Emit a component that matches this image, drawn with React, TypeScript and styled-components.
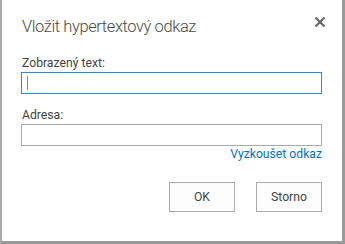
import React from 'react';
import styled, { createGlobalStyle } from 'styled-components';

const GlobalStyle = createGlobalStyle`
  html, body {
    margin: 0;
    padding: 0;
    background: #ffffff;
  }
  body {
    font-family: Roboto, 'Open Sans', sans-serif;
  }
`

const Dialog = styled.div`
  width: 345px;
  height: 244px;
  box-sizing: border-box;
  background: #ffffff;
  border-left: 2px solid #a9a9a9;
  border-right: 3px solid #9a9a9a;
  border-bottom: 3px solid #9a9a9a;
  display: flex;
  flex-direction: column;
`

const Header = styled.div`
  display: flex;
  justify-content: space-between;
  align-items: flex-start;
  padding: 15px 14px 0 20px;
`

const Title = styled.h1`
  margin: 0;
  font-size: 16.5px;
  line-height: 24px;
  letter-spacing: -0.4px;
  font-weight: 300;
  color: #4a4a4a;
`

const CloseButton = styled.button`
  width: 16px;
  height: 16px;
  margin-top: -1px;
  padding: 0;
  border: none;
  background: none;
  display: flex;
  align-items: center;
  justify-content: center;
  color: #666666;
`

const Body = styled.div`
  display: flex;
  flex-direction: column;
  padding: 16px 20px 0 19px;
`

const Field = styled.label<{ $gap: number }>`
  display: flex;
  flex-direction: column;
  margin-bottom: ${props => props.$gap}px;
`

const Label = styled.span`
  font-size: 12.2px;
  line-height: 16px;
  color: #444444;
  margin-bottom: 1px;
  padding-left: 1px;
`

const Input = styled.input<{ $focused?: boolean }>`
  height: 22px;
  box-sizing: border-box;
  margin: 0;
  padding: 0 5px;
  border: 1px solid ${props => props.$focused ? '#2a8ad4' : '#ababab'};
  outline: none;
  font-family: inherit;
  font-size: 12.2px;
  color: #444444;
  background: #ffffff;
`

const Caret = styled.span`
  position: absolute;
  left: 6px;
  top: 4px;
  width: 1px;
  height: 14px;
  background: #8a8a8a;
`

const InputWrap = styled.div`
  position: relative;
  display: flex;
  flex-direction: column;
`

const TestLink = styled.a`
  align-self: flex-end;
  font-size: 12.2px;
  line-height: 16px;
  color: #0072c6;
  text-decoration: none;
`

const Footer = styled.div`
  display: flex;
  justify-content: flex-end;
  gap: 21px;
  padding: 20px 20px 0 0;
`

const Button = styled.button`
  width: 66px;
  height: 30px;
  box-sizing: border-box;
  margin: 0;
  padding: 0;
  border: 1px solid #ababab;
  background: #fdfdfd;
  font-family: inherit;
  font-size: 12.2px;
  color: #444444;
`

function CloseIcon() {
  return <svg width="12" height="12" viewBox="0 0 12 12" aria-hidden>
    <path d="M1.5 1.5 L10.5 10.5 M10.5 1.5 L1.5 10.5" stroke="currentColor" strokeWidth="2.2" strokeLinecap="butt" />
  </svg>
}

export default function App() {
  return <>
    <GlobalStyle />
    <Dialog role="dialog" aria-label="Vložit hypertextový odkaz">
      <Header>
        <Title>Vložit hypertextový odkaz</Title>
        <CloseButton aria-label="Zavřít"><CloseIcon /></CloseButton>
      </Header>
      <Body>
        <Field $gap={13}>
          <Label>Zobrazený text:</Label>
          <InputWrap>
            <Input $focused />
            <Caret />
          </InputWrap>
        </Field>
        <Field $gap={0}>
          <Label>Adresa:</Label>
          <Input />
        </Field>
        <TestLink href="#">Vyzkoušet odkaz</TestLink>
      </Body>
      <Footer>
        <Button>OK</Button>
        <Button>Storno</Button>
      </Footer>
    </Dialog>
  </>
}
